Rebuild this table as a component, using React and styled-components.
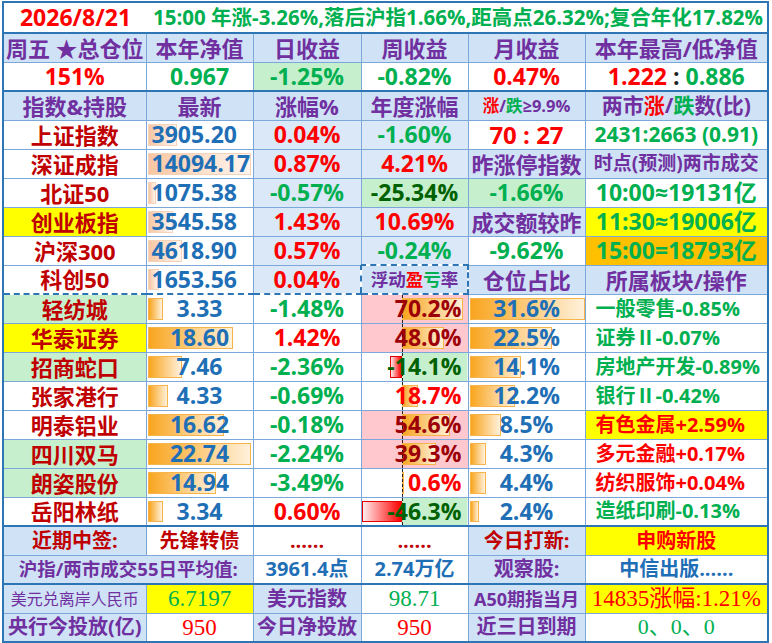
import styled, { createGlobalStyle } from "styled-components";

const line = "#2e75b6";
const thin = "#7ba7d9";
const head = "#cfe2f6";
const soft = "#dae8f8";
const purple = "#7030a0";
const red = "#ff0000";
const dred = "#c00000";
const green = "#00b050";
const dgreen = "#006100";
const blue = "#1f6fb6";
const lgreen = "#c6efce";
const pink = "#ffc7ce";
const mauve = "#9c0006";
const yellow = "#ffff00";
const orange = "#ffc000";

const holdings = [
  { name: "轻纺城", nameBg: lgreen, price: 3.33, chg: "-1.48%", pl: 70.2, pos: 31.6, sector: "一般零售-0.85%", sc: green },
  { name: "华泰证券", nameBg: yellow, price: 18.6, chg: "1.42%", pl: 48.0, pos: 22.5, sector: "证券Ⅱ-0.07%", sc: green },
  { name: "招商蛇口", nameBg: lgreen, price: 7.46, chg: "-2.36%", pl: -14.1, pos: 14.1, sector: "房地产开发-0.89%", sc: green },
  { name: "张家港行", price: 4.33, chg: "-0.69%", pl: 18.7, pos: 12.2, sector: "银行Ⅱ-0.42%", sc: green },
  { name: "明泰铝业", price: 16.62, chg: "-0.18%", pl: 54.6, pos: 8.5, sector: "有色金属+2.59%", sc: red, sBg: yellow },
  { name: "四川双马", nameBg: lgreen, price: 22.74, chg: "-2.24%", pl: 39.3, pos: 4.3, sector: "多元金融+0.17%", sc: red },
  { name: "朗姿股份", nameBg: lgreen, price: 14.94, chg: "-3.49%", pl: 0.6, pos: 4.4, sector: "纺织服饰+0.04%", sc: red },
  { name: "岳阳林纸", price: 3.34, chg: "0.60%", pl: -46.3, pos: 2.4, sector: "造纸印刷-0.13%", sc: green },
];

const App = () => {
  return (
    <>
      <GlobalStyle />
      <Sheet>
        <colgroup>
          <col style={{ width: 143 }} />
          <col style={{ width: 107 }} />
          <col style={{ width: 108 }} />
          <col style={{ width: 107 }} />
          <col style={{ width: 117 }} />
          <col style={{ width: 183 }} />
        </colgroup>
        <tbody>
          <Row $h={31} $thick>
            <Cell colSpan={6}>
              <Title>
                <DateText>2026/8/21</DateText>
                <Summary>15:00 年涨-3.26%,落后沪指1.66%,距高点26.32%;复合年化17.82%</Summary>
              </Title>
            </Cell>
          </Row>
          <Row>
            <Head>周五 ★总仓位</Head>
            <Head>本年净值</Head>
            <Head>日收益</Head>
            <Head>周收益</Head>
            <Head>月收益</Head>
            <Head>本年最高/低净值</Head>
          </Row>
          <Row $thick>
            <Cell $c={red} $s={23}>151%</Cell>
            <Cell $c={green} $s={23}>0.967</Cell>
            <Cell $c={green} $bg={lgreen} $s={23}>-1.25%</Cell>
            <Cell $c={green} $s={23}>-0.82%</Cell>
            <Cell $c={red} $s={23}>0.47%</Cell>
            <Cell $s={23}>
              <Tint $c={red}>1.222</Tint>
              <Tint $c="#222"> : </Tint>
              <Tint $c={green}>0.886</Tint>
            </Cell>
          </Row>
          <Row>
            <Head>指数&amp;持股</Head>
            <Head>最新</Head>
            <Head>涨幅%</Head>
            <Head>年度涨幅</Head>
            <Head $s={16.5}>
              <Tint $c={red}>涨</Tint>/<Tint $c={green}>跌</Tint>≥9.9%
            </Head>
            <Head $s={21}>
              两市<Tint $c={red}>涨</Tint>/<Tint $c={green}>跌</Tint>数(比)
            </Head>
          </Row>
          <Row>
            <Cell $c={dred}>上证指数</Cell>
            <IndexPrice value="3905.20" w={29} />
            <Cell $c={red} $bg={soft} $s={23}>0.04%</Cell>
            <Cell $c={green} $bg={soft} $s={23}>-1.60%</Cell>
            <Cell $c={red} $s={24}>70 : 27</Cell>
            <Cell $c={green} $s={21}>2431:2663 (0.91)</Cell>
          </Row>
          <Row>
            <Cell $c={dred}>深证成指</Cell>
            <IndexPrice value="14094.17" w={103} />
            <Cell $c={red} $bg={soft} $s={23}>0.87%</Cell>
            <Cell $c={red} $bg={soft} $s={23}>4.21%</Cell>
            <Head>昨涨停指数</Head>
            <Head $s={19}>时点(预测)两市成交</Head>
          </Row>
          <Row>
            <Cell $c={dred}>北证50</Cell>
            <IndexPrice value="1075.38" w={8} />
            <Cell $c={green} $bg={soft} $s={23}>-0.57%</Cell>
            <Cell $c={dgreen} $bg={lgreen} $s={23}>-25.34%</Cell>
            <Cell $c={green} $bg={lgreen} $s={23}>-1.66%</Cell>
            <Cell $c={green} $s={23}>10:00≈19131亿</Cell>
          </Row>
          <Row>
            <Cell $c={dred} $bg={yellow}>创业板指</Cell>
            <IndexPrice value="3545.58" w={25} />
            <Cell $c={red} $bg={soft} $s={23}>1.43%</Cell>
            <Cell $c={red} $bg={soft} $s={23}>10.69%</Cell>
            <Head>成交额较昨</Head>
            <Cell $c={green} $bg={yellow} $s={23}>11:30≈19006亿</Cell>
          </Row>
          <Row>
            <Cell $c={dred}>沪深300</Cell>
            <IndexPrice value="4618.90" w={34} />
            <Cell $c={red} $bg={soft} $s={23}>0.57%</Cell>
            <Cell $c={green} $bg={soft} $s={23}>-0.24%</Cell>
            <Cell $c={green} $s={23}>-9.62%</Cell>
            <Cell $c={green} $bg={orange} $s={23}>15:00=18793亿</Cell>
          </Row>
          <Row>
            <Cell $c={dred} $dash>科创50</Cell>
            <IndexPrice value="1653.56" w={11} dash />
            <Cell $c={red} $bg={soft} $s={23} $dash>0.04%</Cell>
            <DashHead $s={17.5}>
              浮动<Tint $c={red}>盈</Tint><Tint $c={green}>亏</Tint>率
            </DashHead>
            <Head>仓位占比</Head>
            <Head>所属板块/操作</Head>
          </Row>
          {holdings.map((h, i) => (
            <Row key={h.name} $thick={i === holdings.length - 1}>
              <Cell $c={dred} $bg={h.nameBg}>{h.name}</Cell>
              <Cell $c={blue} $s={23}>
                <Bar $kind="orange" style={{ left: 1, width: Math.round(h.price * 4.55) }} />
                <Val>{h.price.toFixed(2)}</Val>
              </Cell>
              <Cell $c={h.chg.startsWith("-") ? green : red} $s={23}>{h.chg}</Cell>
              <ProfitCell value={h.pl} />
              <Cell $c={blue} $s={23}>
                <Bar $kind="orange" style={{ left: 1, width: Math.round(h.pos * 3.65) }} />
                <Val>{h.pos.toFixed(1)}%</Val>
              </Cell>
              <Cell $c={h.sc} $bg={h.sBg} $s={20} $al="left" $pl={10}>{h.sector}</Cell>
            </Row>
          ))}
          <Row>
            <Head $c={dred} $s={20}>近期中签:</Head>
            <Cell $c={dred} $s={20}>先锋转债</Cell>
            <Cell $c={dred} $s={20}>......</Cell>
            <Cell $c={dred} $s={20}>......</Cell>
            <Head $c={dred} $s={20}>今日打新:</Head>
            <Cell $c={red} $bg={yellow} $s={20}>申购新股</Cell>
          </Row>
          <Row $thick>
            <Head colSpan={2} $s={18.5}>沪指/两市成交55日平均值:</Head>
            <Cell $c={blue} $s={20}>3961.4点</Cell>
            <Cell $c={blue} $s={20}>2.74万亿</Cell>
            <Head $s={20}>观察股:</Head>
            <Cell $c={blue} $s={20}>中信出版......</Cell>
          </Row>
          <Row>
            <Head $s={16} $light>美元兑离岸人民币</Head>
            <Cell $c={green} $bg={yellow} $s={23} $serif>6.7197</Cell>
            <Head $s={20}>美元指数</Head>
            <Cell $c={green} $s={23} $serif>98.71</Cell>
            <Head $s={18}>A50期指当月</Head>
            <Cell $c={red} $bg={yellow} $s={23} $serif>14835涨幅:1.21%</Cell>
          </Row>
          <Row>
            <Head $s={20}>央行今投放(亿)</Head>
            <Cell $c={red} $s={23} $serif>950</Cell>
            <Head $s={20}>今日净投放</Head>
            <Cell $c={red} $s={23} $serif>950</Cell>
            <Head $s={20}>近三日到期</Head>
            <Cell $c={green} $s={22} $serif>0、0、0</Cell>
          </Row>
        </tbody>
      </Sheet>
    </>
  );
};

const IndexPrice = ({ value, w, dash }) => (
  <Cell $c={blue} $s={23} $al="left" $pl={5} $dash={dash}>
    <Bar $kind="peach" style={{ left: 1, width: w }} />
    <Val>{value}</Val>
  </Cell>
);

// 浮动盈亏率: axis at 40px, positive bars to the right, losses to the left
const ProfitCell = ({ value }) => {
  const w = Math.max(2, Math.round(Math.abs(value) * 0.87));
  const neg = value < 0;
  const strong = value >= 20;
  return (
    <Profit
      $tone={neg ? "neg" : strong ? "pink" : "white"}
      $c={neg ? dgreen : strong ? mauve : red}
      $s={23}
      $al="right"
      $pr={6}
    >
      <Bar
        $kind={neg ? "red" : "orange"}
        style={neg ? { left: 40 - w, width: w } : { left: 40, width: w }}
      />
      <Axis />
      <Val>{value.toFixed(1)}%</Val>
    </Profit>
  );
};

export default App;

const GlobalStyle = createGlobalStyle`
  body {
    margin: 0;
    background: #fff;
  }
`;

const Sheet = styled.table`
  border-collapse: collapse;
  table-layout: fixed;
  width: 767px;
  margin: 1px 0 0 2px;
  border: 2px solid ${line};
  font-family: "Open Sans", "Noto Sans CJK SC", sans-serif;
`;

const Row = styled.tr`
  height: ${({ $h }) => $h || 29}px;
  ${({ $thick }) => $thick && `& > td { border-bottom: 2px solid ${line}; }`}
`;

const Cell = styled.td`
  position: relative;
  white-space: nowrap;
  box-sizing: border-box;
  border: 1px solid ${thin};
  padding: 0 ${({ $pr }) => $pr || 0}px 0 ${({ $pl }) => $pl || 0}px;
  background: ${({ $bg }) => $bg || "#fff"};
  color: ${({ $c }) => $c || purple};
  font-size: ${({ $s }) => $s || 22}px;
  font-weight: ${({ $light }) => ($light ? 400 : 700)};
  text-align: ${({ $al }) => $al || "center"};
  line-height: 1;
  ${({ $serif }) =>
    $serif && `font-family: "Liberation Serif", "Noto Sans CJK SC", serif; font-weight: 400;`}
  ${({ $dash }) => $dash && `border-bottom: 2px dashed ${line};`}
`;

const Head = styled(Cell)`
  background: ${head};
`;

const DashHead = styled(Head)`
  border: 2px dashed ${line};
`;

const Profit = styled(Cell)`
  background: ${({ $tone }) =>
    $tone === "pink"
      ? pink
      : $tone === "neg"
      ? `linear-gradient(to right, #fff 40px, ${lgreen} 40px)`
      : "#fff"};
`;

const Title = styled.div`
  display: flex;
  align-items: center;
`;

const DateText = styled.span`
  width: 143px;
  text-align: center;
  color: ${red};
  font-size: 23px;
`;

const Summary = styled.span`
  padding-left: 6px;
  color: ${green};
  font-size: 20.5px;
`;

const Tint = styled.span`
  color: ${({ $c }) => $c};
`;

const Val = styled.span`
  position: relative;
  z-index: 1;
`;

const barColors = {
  orange: ["#f9a51f", "#fff1db", "#f6b44a", "right"],
  peach: ["#f8c6a2", "#fff6f0", "#f6d2b8", "right"],
  red: ["#ff0000", "#ffecec", "#e60000", "left"],
};

const Bar = styled.span`
  position: absolute;
  top: 3px;
  bottom: 3px;
  box-sizing: border-box;
  border: 1px solid ${({ $kind }) => barColors[$kind][2]};
  background: linear-gradient(
    to ${({ $kind }) => barColors[$kind][3]},
    ${({ $kind }) => barColors[$kind][0]},
    ${({ $kind }) => barColors[$kind][1]}
  );
`;

const Axis = styled.span`
  position: absolute;
  left: 40px;
  top: 0;
  bottom: 0;
  border-left: 1px dashed #222;
`;
